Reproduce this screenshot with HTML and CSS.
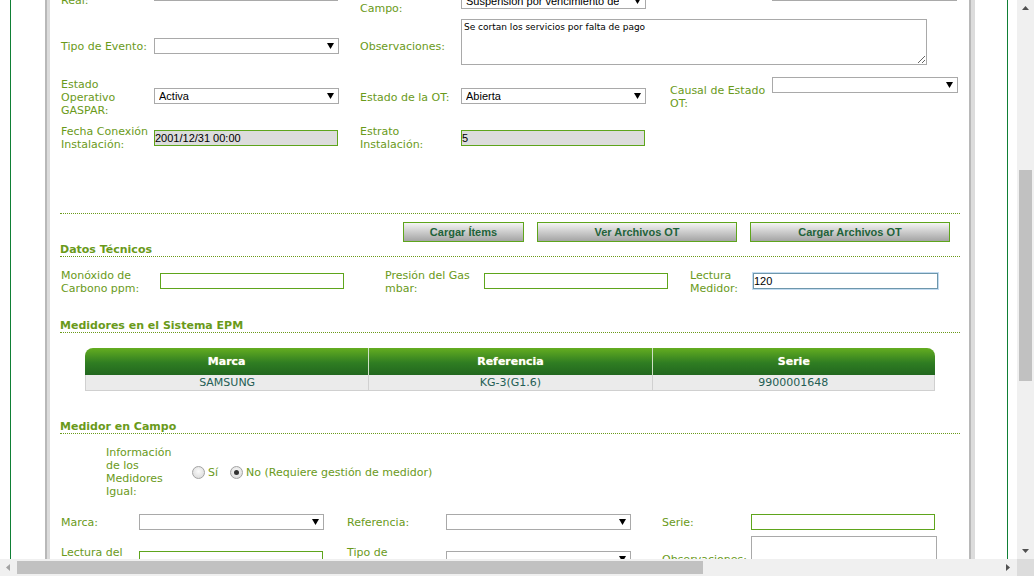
FILE: index.html
```html
<!DOCTYPE html>
<html lang="es">
<head>
<meta charset="utf-8">
<title>Orden de Trabajo</title>
<link rel="stylesheet" href="styles.css">
</head>
<body>
<div class="viewport">
  <div class="frame">
    <div class="panel">
      <div class="panel-inner">
        <div class="content">

          <div class="grid-top">
            <!-- row 1 -->
            <div class="lbl lbl-first r1 r1-left">Fecha Ejecución Real:</div>
            <div class="r1 r1-box"><input class="txt gray-border" type="text" value=""></div>
            <div class="lbl r1 r1-mid">Resultado en Campo:</div>
            <div class="r1 r1-sel"><div class="select"><span>Suspensión por vencimiento de</span><svg class="arw" width="7" height="6" viewBox="0 0 7 6"><path d="M0 0H7L3.5 6Z"/></svg></div></div>
            <div class="lbl r1"></div>
            <div class="r1 r1-box"><input class="txt gray-border w185" type="text" value=""></div>

            <!-- row 2 -->
            <div class="lbl lbl-first">Tipo de Evento:</div>
            <div><div class="select"><span></span><svg class="arw" width="7" height="6" viewBox="0 0 7 6"><path d="M0 0H7L3.5 6Z"/></svg></div></div>
            <div class="lbl">Observaciones:</div>
            <div class="span3 top-obs"><textarea class="obs">Se cortan los servicios por falta de pago</textarea></div>

            <!-- row 3 -->
            <div class="lbl lbl-first">Estado Operativo GASPAR:</div>
            <div class="up"><div class="select"><span>Activa</span><svg class="arw" width="7" height="6" viewBox="0 0 7 6"><path d="M0 0H7L3.5 6Z"/></svg></div></div>
            <div class="lbl">Estado de la OT:</div>
            <div class="up"><div class="select"><span>Abierta</span><svg class="arw" width="7" height="6" viewBox="0 0 7 6"><path d="M0 0H7L3.5 6Z"/></svg></div></div>
            <div class="lbl">Causal de Estado OT:</div>
            <div class="top-causal"><div class="select w186"><span></span><svg class="arw" width="7" height="6" viewBox="0 0 7 6"><path d="M0 0H7L3.5 6Z"/></svg></div></div>

            <!-- row 4 -->
            <div class="lbl lbl-first">Fecha Conexión Instalación:</div>
            <div><input class="txt readonly" type="text" value="2001/12/31 00:00" readonly></div>
            <div class="lbl">Estrato Instalación:</div>
            <div><input class="txt readonly" type="text" value="5" readonly></div>
            <div></div>
            <div></div>
          </div>

          <div class="sep"></div>

          <div class="btn-row">
            <button class="btn w121" type="button">Cargar Ítems</button>
            <button class="btn w200" type="button">Ver Archivos OT</button>
            <button class="btn w200" type="button">Cargar Archivos OT</button>
          </div>

          <div class="section-title st-datos">Datos Técnicos</div>

          <div class="grid-datos">
            <div class="lbl lbl-first">Monóxido de Carbono ppm:</div>
            <div class="up"><input class="txt green" type="text" value=""></div>
            <div class="lbl">Presión del Gas mbar:</div>
            <div class="up"><input class="txt green" type="text" value=""></div>
            <div class="lbl">Lectura Medidor:</div>
            <div class="up"><input class="txt focus w185" type="text" value="120"></div>
          </div>

          <div class="section-title st-med">Medidores en el Sistema EPM</div>

          <table class="meters">
            <thead>
              <tr><th>Marca</th><th>Referencia</th><th>Serie</th></tr>
            </thead>
            <tbody>
              <tr><td>SAMSUNG</td><td>KG-3(G1.6)</td><td>9900001648</td></tr>
            </tbody>
          </table>

          <div class="section-title st-campo">Medidor en Campo</div>

          <div class="info-row">
            <div class="lbl info-lbl">Información de los Medidores Igual:</div>
            <div class="radios">
              <span class="radio"></span><span class="radio-lbl">Sí</span>
              <span class="radio checked"></span><span class="radio-lbl">No (Requiere gestión de medidor)</span>
            </div>
          </div>

          <div class="grid-campo">
            <div class="lbl lbl-first">Marca:</div>
            <div><div class="select"><span></span><svg class="arw" width="7" height="6" viewBox="0 0 7 6"><path d="M0 0H7L3.5 6Z"/></svg></div></div>
            <div class="lbl">Referencia:</div>
            <div><div class="select"><span></span><svg class="arw" width="7" height="6" viewBox="0 0 7 6"><path d="M0 0H7L3.5 6Z"/></svg></div></div>
            <div class="lbl">Serie:</div>
            <div><input class="txt green" type="text" value=""></div>

            <div class="lbl lbl-first">Lectura del Medidor:</div>
            <div><input class="txt green" type="text" value=""></div>
            <div class="lbl">Tipo de<br>Medidor:</div>
            <div><div class="select"><span></span><svg class="arw" width="7" height="6" viewBox="0 0 7 6"><path d="M0 0H7L3.5 6Z"/></svg></div></div>
            <div class="lbl">Observaciones:</div>
            <div><textarea class="obs obs-small"></textarea></div>
          </div>

        </div>
      </div>
    </div>
  </div>

  <div class="vscroll">
    <svg class="sb-arrow up-arrow" width="7" height="4" viewBox="0 0 7 4"><path d="M3.5 0L7 4H0Z"/></svg>
    <div class="vthumb"></div>
    <svg class="sb-arrow down-arrow" width="7" height="4" viewBox="0 0 7 4"><path d="M0 0H7L3.5 4Z"/></svg>
  </div>
  <div class="hscroll">
    <svg class="sb-arrow left-arrow" width="4" height="7" viewBox="0 0 4 7"><path d="M4 0V7L0 3.5Z"/></svg>
    <div class="hthumb"></div>
    <svg class="sb-arrow right-arrow" width="4" height="7" viewBox="0 0 4 7"><path d="M0 0L4 3.5L0 7Z"/></svg>
  </div>
  <div class="corner"></div>
</div>
</body>
</html>
```
FILE: styles.css
```css
* { box-sizing: border-box; }

html, body {
  margin: 0;
  padding: 0;
}

body {
  width: 1034px;
  height: 576px;
  overflow: hidden;
  background: #fff;
  font-family: "DejaVu Sans", Verdana, sans-serif;
  font-size: 11px;
  line-height: 13px;
  color: #6a9a1a;
}

.viewport {
  position: relative;
  width: 1034px;
  height: 576px;
  overflow: hidden;
}

/* page frame */
.frame {
  margin-left: 10px;
  width: 998px;
  height: 576px;
  border-left: 1px solid #0f7f35;
  border-right: 1px solid #0f7f35;
  padding-left: 34px;
}

.panel {
  width: 930px;
  height: 100%;
  padding: 0 6px 0 5px;
  background:
    linear-gradient(to right, #b8b8b8 0, #b8b8b8 2px, #dcdcdc 2px, #dcdcdc 5px, transparent 5px) left top / 5px 100% no-repeat,
    linear-gradient(to right, #b8b8b8 0, #b8b8b8 2px, #dcdcdc 2px) right top / 6px 100% no-repeat;
}

.panel-inner {
  height: 100%;
  background: #fff;
  overflow: hidden;
  padding: 0 9px 0 10px;
}

.content {
  margin-top: -24px;
}

/* labels */
.lbl {
  color: #6a9a1a;
  padding-right: 3px;
}

.lbl-first {
  padding-left: 1px;
}

/* top grid */
.grid-top {
  display: grid;
  grid-template-columns: 94px 206px 101px 209px 102px 188px;
  grid-template-rows: 41px 58px 44px 37px;
  align-items: center;
}

.r1 { align-self: end; }
.r1-left { margin-bottom: 10px; }
.r1-box { margin-bottom: 16px; }
.r1-mid { margin-bottom: 2px; }
.r1-sel { margin-bottom: 8px; }

.span3 { grid-column: span 3; }
.top-obs { align-self: start; margin-top: 2px; }
.top-causal { align-self: start; margin-top: 2px; }
.up { margin-bottom: 3px; }

/* controls */
.select {
  display: flex;
  align-items: center;
  justify-content: space-between;
  width: 185px;
  height: 16px;
  border: 1px solid #a9a9a9;
  background: #fff;
  padding: 0 4px 0 4px;
  font-family: "Liberation Sans", Arial, sans-serif;
  font-size: 11px;
  line-height: 14px;
  color: #000;
  white-space: nowrap;
  overflow: hidden;
}

.select span {
  overflow: hidden;
}

.w186 { width: 186px; }
.w185 { width: 185px !important; }

.arw {
  flex: none;
  fill: #000;
}

.txt {
  display: block;
  width: 184px;
  height: 16px;
  margin: 0;
  padding: 0;
  font-family: "Liberation Sans", Arial, sans-serif;
  font-size: 11px;
  color: #000;
  background: #fff;
  outline: none;
}

.gray-border { border: 1px solid #a9a9a9; }

.readonly {
  border: 1px solid #5ea51c;
  background: #dcdcdc;
}

.green { border: 1px solid #5ea51c; }

.focus {
  border: 1px solid #6e97ab;
  box-shadow: 0 0 0 1px #c3dcf2;
}

.obs {
  display: block;
  width: 466px;
  height: 46px;
  margin: 0;
  border: 1px solid #a9a9a9;
  padding: 2px 2px;
  font-family: "DejaVu Sans", sans-serif;
  font-size: 9px;
  line-height: 11px;
  color: #000;
  resize: both;
  outline: none;
}

.obs-small { width: 186px; }

/* separators and titles */
.sep {
  margin-top: 57px;
  border-top: 1px dotted #6a9a1a;
}

.btn-row {
  display: flex;
  justify-content: flex-end;
  gap: 13px;
  margin-top: 8px;
  padding-right: 10px;
}

.btn {
  height: 20px;
  margin: 0;
  padding: 0;
  border: 1px solid #5ea51c;
  background: linear-gradient(#f4f4f4, #a4a4a4);
  font-family: "Liberation Sans", Arial, sans-serif;
  font-weight: bold;
  font-size: 11px;
  color: #1f633a;
}

.w121 { width: 121px; }
.w200 { width: 200px; }

.section-title {
  font-weight: bold;
  color: #6a9a1a;
  line-height: 13px;
  border-bottom: 1px dotted #6a9a1a;
}

.st-datos { margin-top: 1px; }
.st-med { margin-top: 24px; }
.st-campo { margin-top: 29px; }

/* datos tecnicos */
.grid-datos {
  display: grid;
  grid-template-columns: 100px 225px 99px 206px 63px 207px;
  align-items: center;
  margin-top: 12px;
}

/* table */
.meters {
  width: 850px;
  margin: 15px 25px 0;
  border-collapse: separate;
  border-spacing: 0;
  table-layout: fixed;
}

.meters th {
  height: 27px;
  padding: 0;
  background: linear-gradient(#64ad20, #2f7d22 55%, #22671f);
  color: #fff;
  font-weight: bold;
  text-align: center;
  text-shadow: 0 0 1px #c9d86a;
  border-left: 1px solid #cfe0c6;
}

.meters th:first-child {
  border-left: none;
  border-top-left-radius: 8px;
}

.meters th:last-child {
  border-top-right-radius: 8px;
}

.meters td {
  height: 16px;
  padding: 1px 0 0;
  background: #ebebeb;
  color: #245e54;
  text-align: center;
  line-height: 14px;
  border-bottom: 1px solid #d0d0d0;
  border-left: 1px solid #d0d0d0;
}

.meters td:last-child {
  border-right: 1px solid #d0d0d0;
}

/* medidor en campo */
.info-row {
  display: flex;
  align-items: center;
  margin-top: 12px;
  padding-left: 46px;
}

.info-lbl {
  width: 76px;
  padding-right: 0;
}

.radios {
  display: flex;
  align-items: center;
  margin-left: 10px;
}

.radio {
  width: 13px;
  height: 13px;
  border-radius: 50%;
  border: 1px solid #a3a3a3;
  background: radial-gradient(circle at 50% 40%, #fafafa, #d6d6d6);
  display: flex;
  align-items: center;
  justify-content: center;
}

.radio.checked::after {
  content: "";
  width: 5px;
  height: 5px;
  border-radius: 50%;
  background: #333;
}

.radio-lbl {
  margin-left: 3px;
}

.radio-lbl + .radio {
  margin-left: 12px;
}

.grid-campo {
  display: grid;
  grid-template-columns: 79px 208px 99px 216px 89px 209px;
  grid-template-rows: 16px 46px;
  row-gap: 6px;
  align-items: center;
  margin-top: 16px;
}

/* fake scrollbars */
.vscroll {
  position: absolute;
  right: 0;
  top: 0;
  width: 17px;
  height: 559px;
  background: #f0f0f0;
}

.vthumb {
  position: absolute;
  left: 2px;
  top: 170px;
  width: 13px;
  height: 211px;
  background: #c1c1c1;
}

.hscroll {
  position: absolute;
  left: 0;
  bottom: 0;
  width: 1017px;
  height: 17px;
  background: #f0f0f0;
}

.hthumb {
  position: absolute;
  left: 17px;
  top: 2px;
  width: 686px;
  height: 13px;
  background: #c1c1c1;
}

.corner {
  position: absolute;
  right: 0;
  bottom: 0;
  width: 17px;
  height: 17px;
  background: #dcdcdc;
}

.sb-arrow {
  position: absolute;
  fill: #505050;
}

.up-arrow { left: 5px; top: 6px; }
.down-arrow { left: 5px; bottom: 6px; }
.left-arrow { left: 6px; top: 5px; fill: #a3a3a3; }
.right-arrow { right: 7px; top: 5px; }
```
